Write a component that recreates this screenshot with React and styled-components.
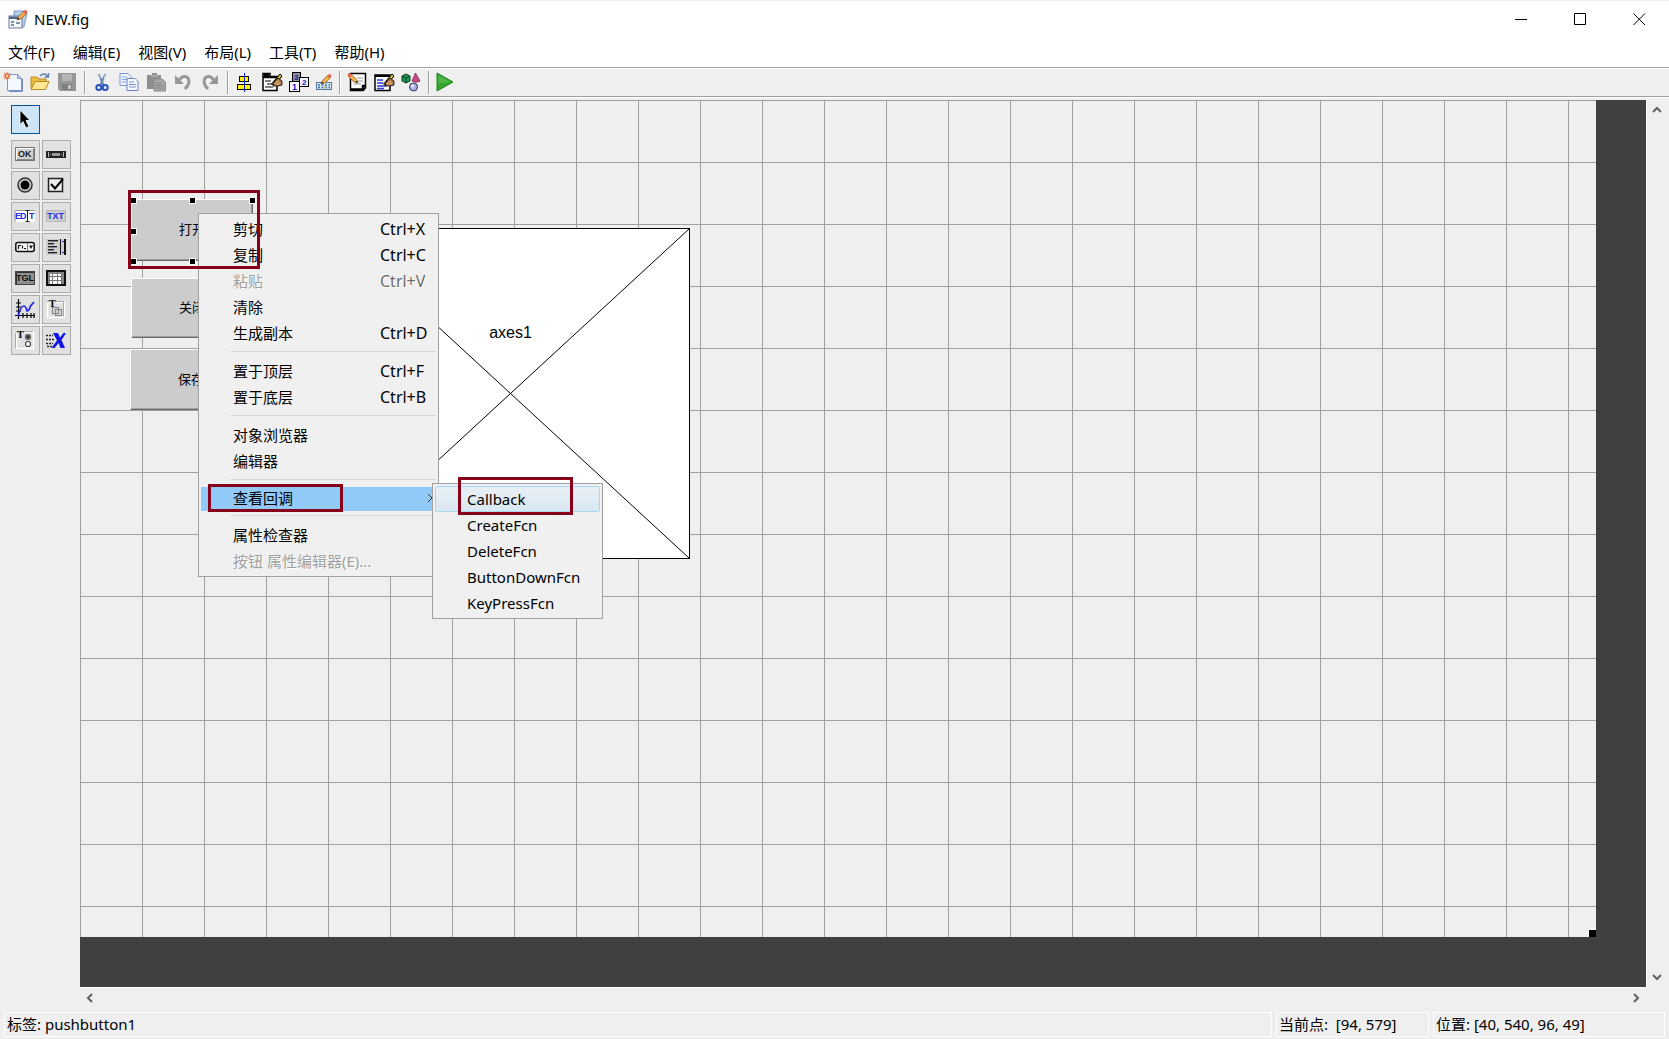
import React from "react";
import styled, { createGlobalStyle, css } from "styled-components";

const UI_FONT = `"Noto Sans", "Noto Sans CJK SC", sans-serif`;
const FACE = "#efefef";
const LINE = "#a0a0a0";
const MARK = "#850018";

const GlobalStyle = createGlobalStyle`
  * { box-sizing: border-box; }
  body { margin: 0; font: 15px/20px ${UI_FONT}; color: #000; background: ${FACE}; }
  button { font: inherit; color: inherit; border: 0; padding: 0; background: none; }
  svg { display: block; flex: none; overflow: visible; }
`;

const Window = styled.div`
  display: flex;
  flex-direction: column;
  height: 100vh;
  overflow: hidden;
  background: ${FACE};
`;

const TitleBar = styled.header`
  display: flex;
  align-items: center;
  height: 37px;
  padding-left: 8px;
  gap: 6px;
  background: #fff;
  border-top: 1px solid ${FACE};
`;

const Title = styled.h1`
  flex: 1;
  margin: 0;
  font-size: 15px;
  font-weight: 400;
  line-height: 20px;
`;

const CaptionButtons = styled.div`
  display: flex;
`;

const CaptionButton = styled.button`
  display: flex;
  align-items: center;
  justify-content: center;
  width: 59px;
  height: 36px;
`;

const MenuBar = styled.nav`
  display: flex;
  align-items: center;
  gap: 18px;
  height: 31px;
  padding-left: 8px;
  background: #fff;
  border-bottom: 1px solid ${LINE};
`;

const Toolbar = styled.div`
  display: flex;
  align-items: flex-start;
  height: 29px;
  border-top: 1px solid #fff;
  border-bottom: 1px solid ${LINE};
`;

const ToolButton = styled.button`
  display: flex;
  align-items: center;
  justify-content: center;
  width: ${(p) => (p.$narrow ? 23 : 27)}px;
  height: 26px;
  padding-right: 1px;
`;

const ToolDivider = styled.span`
  width: 2px;
  height: 23px;
  margin: 2px 3px;
  border-left: 1px solid ${LINE};
  border-right: 1px solid #fff;
`;

const Body = styled.main`
  display: flex;
  flex: 1;
  min-height: 0;
  border-top: 1px solid #fff;
  padding-top: 2px;
`;

const Palette = styled.aside`
  width: 80px;
  padding: 5px 9px 0 11px;
`;

const PaletteGrid = styled.div`
  display: grid;
  grid-template-columns: 29px 29px;
  gap: 2px;
  margin-top: 6px;
`;

const PaletteButton = styled.button`
  display: flex;
  align-items: center;
  justify-content: center;
  width: 29px;
  height: 29px;
  padding: 0 1px 1px 0;
  background: ${(p) => (p.$active ? "#cce4f7" : "#e1e1e1")};
  border: 1px solid ${(p) => (p.$active ? "#005499" : "#adadad")};
`;

const Workspace = styled.section`
  display: grid;
  flex: 1;
  min-width: 0;
  grid-template-columns: 1fr 23px;
  grid-template-rows: 1fr 25px;
`;

const Backdrop = styled.div`
  display: flex;
  padding: 0 50px 50px 0;
  background: #404040;
  min-width: 0;
  min-height: 0;
`;

const Canvas = styled.div`
  position: relative;
  flex: 1;
  background-color: ${FACE};
  background-image: linear-gradient(${LINE} 1px, transparent 1px),
    linear-gradient(90deg, ${LINE} 1px, transparent 1px);
  background-size: 62px 62px;
`;

const ScrollBar = styled.div`
  display: flex;
  justify-content: space-between;
  flex-direction: ${(p) => (p.$vertical ? "column" : "row")};
  align-items: flex-start;
  ${(p) =>
    p.$vertical
      ? css`border-left: 1px solid #fff;`
      : css`border-top: 1px solid #fff;`}
`;

const ScrollButton = styled.button`
  display: flex;
  align-items: center;
  justify-content: center;
  width: 20px;
  height: 20px;
`;

const PushButton = styled.button`
  position: absolute;
  left: ${(p) => p.$x}px;
  top: ${(p) => p.$y}px;
  width: 122px;
  height: ${(p) => p.$h}px;
  padding-bottom: 2px;
  background: #ccc;
  font: 13px/16px "Noto Sans CJK SC", sans-serif;
  border: 1px solid;
  border-color: #fff #696969 #696969 #fff;
  box-shadow: inset -1px -1px #a0a0a0;
`;

const Handle = styled.i`
  position: absolute;
  left: ${(p) => p.$x}px;
  top: ${(p) => p.$y}px;
  width: 5px;
  height: 5px;
  background: #000;
  box-shadow: 0 0 0 1px #fff;
`;

const ResizeCorner = styled.i`
  position: absolute;
  right: 0;
  bottom: 0;
  width: 8px;
  height: 8px;
  background: #000;
  border: solid #fff;
  border-width: 1px 0 0 1px;
`;

const Axes = styled.div`
  position: absolute;
  left: 251px;
  top: 128px;
  width: 359px;
  height: 331px;
  background: #fff;
  border: 1px solid #000;
`;

const AxesCross = styled.svg`
  width: 100%;
  height: 100%;
`;

const AxesLabel = styled.span`
  position: absolute;
  left: 0;
  right: 0;
  top: 94px;
  text-align: center;
  font: 16px/20px "Liberation Sans", Arial, sans-serif;
`;

const Popup = styled.div`
  position: absolute;
  left: ${(p) => p.$x}px;
  top: ${(p) => p.$y}px;
  width: ${(p) => p.$w}px;
  padding: ${(p) => p.$pad};
  background: #f0f0f0;
  border: 1px solid ${LINE};
`;

const MenuItem = styled.button`
  display: flex;
  align-items: center;
  width: 100%;
  height: ${(p) => (p.$open ? 24 : 26)}px;
  padding: 0 3px 2px 32px;
  text-align: left;
  white-space: nowrap;
  background: ${(p) => (p.$open ? "#91c9f7" : "none")};
  &:disabled {
    color: #a0a0a0;
    text-shadow: 1px 1px #fff;
  }
`;

const MenuLabel = styled.span`
  flex: 1 0 147px;
`;

const Shortcut = styled.span`
  flex: 0 0 53px;
  font-size: 16px;
  ${MenuItem}:disabled & { color: #6d6d6d; }
`;

const MenuRule = styled.hr`
  height: 1px;
  margin: 4px 0 7px 30px;
  border: 0;
  background: #d7d7d7;
`;

const SubItem = styled.button`
  display: block;
  width: 100%;
  height: 26px;
  padding-left: 31px;
  text-align: left;
  border: 1px solid transparent;
  border-radius: 2px;
  ${(p) =>
    p.$hot &&
    css`
      border-color: #a8d8f0;
      background: linear-gradient(#e8eff4, #d9e8f1);
    `}
`;

const Marker = styled.div`
  position: absolute;
  left: ${(p) => p.$x}px;
  top: ${(p) => p.$y}px;
  width: ${(p) => p.$w}px;
  height: ${(p) => p.$h}px;
  border: 3px solid ${MARK};
  pointer-events: none;
`;

const StatusBar = styled.footer`
  display: flex;
  gap: 4px;
  padding: 0 4px 2px;
`;

const StatusCell = styled.div`
  flex: ${(p) => (p.$w ? `0 0 ${p.$w}px` : "1")};
  height: 25px;
  padding: 0 2px;
  line-height: 23px;
  white-space: pre;
  border: 1px solid #fff;
`;

/* ---------- icons ---------- */

const Svg = ({ s = 20, crisp, children }) => (
  <svg width={s} height={s} viewBox="0 0 20 20" fill="none" aria-hidden="true"
    shapeRendering={crisp ? "crispEdges" : "auto"}>
    {children}
  </svg>
);

const Pencil = ({ x = 0, y = 0 }) => (
  <g transform={`translate(${x} ${y})`}>
    <path d="M0 10 1.5 6.500 7 1 9.500 3.500 4 9Z" fill="#f3b04a" stroke="#8a5a1c" strokeWidth=".7" />
    <path d="M6 2 7.500.500Q9-.500 10 1 11 2 10 3L8.500 4.500Z" fill="#e8674a" />
    <path d="M0 10 1 7.500 2.500 9Z" fill="#222" />
  </g>
);

const Hand = () => (
  <g>
    <path d="M9.500 12 18 2 20 4 13 13Z" fill="#d8c23c" stroke="#000" />
    <path d="M12 10 16 6 20 9V13L15 14 11 14Z" fill="#b07a48" stroke="#000" strokeWidth=".8" />
    <path d="M13 12 17 9M15 13 18 11" stroke="#f0c890" />
  </g>
);

const AppIcon = () => (
  <Svg>
    <path d="M6 2H17L19 4 16 18 6 17Z" fill="#b9cdea" stroke="#7f9ccc" />
    <rect x="1" y="7" width="13" height="12" fill="#f4f7fb" stroke="#66799c" />
    <path d="M1 7.500H14V10H1Z" fill="#53688f" />
    <path d="M3 13H6M3 16H6M8 14H12" stroke="#5b6d8e" strokeWidth="1.500" />
    <Pencil x={9} y={1} />
  </Svg>
);

const NewIcon = () => (
  <Svg>
    <path d="M4.500 2.500H14.500L18.500 6.500V18.500H4.500Z" fill="#f3f7ff" stroke="#7c97cf" />
    <path d="M19.500 7V19.500H6" stroke="#7088bd" />
    <path d="M14.500 2.500V6.500H18.500Z" fill="#bccdf0" stroke="#7c97cf" />
    <path d="M4 0V8M0 4H8M1 1 7 7M7 1 1 7" stroke="#e58a66" strokeWidth="1.200" />
    <circle cx="4" cy="4" r="2" fill="#f9cf9a" stroke="#d8552e" />
  </Svg>
);

const OpenIcon = () => (
  <Svg>
    <path d="M1 16V5H7L9 7H16V10" fill="#e9bf4a" stroke="#b98a1e" />
    <path d="M1 17.500 5 9.500H19L15.500 17.500Z" fill="#ffe793" stroke="#b98a1e" />
    <path d="M10 4Q14 0 18 4M18.500 1V5H14.500" stroke="#5f7fae" strokeWidth="1.300" />
  </Svg>
);

const SaveIcon = () => (
  <Svg>
    <path d="M1 1H19V19H3L1 17Z" fill="#969696" />
    <path d="M5 2H15V9H5Z" fill="#b5b5b5" />
    <path d="M5 12H15V18H5Z" fill="#7f7f7f" />
    <path d="M11 13H14V17H11Z" fill="#c4c4c4" />
  </Svg>
);

const CutIcon = () => (
  <Svg>
    <path d="M6.500 2 12 14M13.500 2 8 14" stroke="#6b87a8" strokeWidth="2" />
    <path d="M6.500 2 8 7M13.500 2 12 7" stroke="#c5d5e6" />
    <circle cx="6.800" cy="15.500" r="2.500" stroke="#2455c0" strokeWidth="2" />
    <circle cx="13.200" cy="15.500" r="2.500" stroke="#2455c0" strokeWidth="2" />
  </Svg>
);

const CopyIcon = () => (
  <Svg>
    <path d="M1 1.500H9L12 4.500V13.500H1Z" fill="#eef3ff" stroke="#7c97cf" />
    <path d="M3 5H8M3 7.500H9M3 10H7" stroke="#8aa3d8" />
    <path d="M8 6.500H16L19 9.500V18.500H8Z" fill="#f5f8ff" stroke="#6682c0" />
    <path d="M10 10H15M10 12.500H17M10 15H17" stroke="#6f8fd0" />
  </Svg>
);

const PasteIcon = () => (
  <Svg>
    <path d="M1 3H6V1H11V3H15V17H1Z" fill="#8f8f8f" />
    <path d="M5 4H12" stroke="#bdbdbd" />
    <path d="M8 7H16L19.500 10V19H8Z" fill="#a6a6a6" stroke="#8a8a8a" />
    <path d="M10 11H15M10 13.500H17M10 16H17" stroke="#828282" />
  </Svg>
);

const UndoIcon = () => (
  <Svg>
    <path d="M6 8Q11 2 15 6 18 11 12 17" stroke="#979797" strokeWidth="3" />
    <path d="M2 3V12H11Z" fill="#979797" />
  </Svg>
);

const RedoIcon = () => (
  <Svg>
    <path d="M14 8Q9 2 5 6 2 11 8 17" stroke="#979797" strokeWidth="3" />
    <path d="M18 3V12H9Z" fill="#979797" />
  </Svg>
);

const AlignIcon = () => (
  <Svg crisp>
    <rect x="4.500" y="4.500" width="9" height="5" fill="#ffee00" stroke="#000" />
    <rect x="2.500" y="12.500" width="13" height="5" fill="#ffee00" stroke="#000" />
    <path d="M9 1V20" stroke="#1020d0" />
  </Svg>
);

const MenuEditorIcon = () => (
  <Svg>
    <path d="M1 1.500H8V5H15V18.500H1Z" fill="#fff" stroke="#000" strokeWidth="1.500" />
    <path d="M1 5H19M2 3H7" stroke="#000" strokeWidth="2.500" />
    <path d="M3 9H9M5 12H11M3 15H11" stroke="#555" strokeWidth="1.500" />
    <Hand />
  </Svg>
);

const IconText = styled.text`
  font: bold ${(p) => p.$size || 9}px "Liberation Sans", Arial, sans-serif;
`;

const SerifText = styled.text`
  font: bold 10px "Liberation Serif", "Times New Roman", serif;
`;

const TabOrderIcon = () => (
  <Svg crisp>
    <rect x="3.500" y=".5" width="8" height="9" fill="#8f8f9f" stroke="#000" />
    <rect x="10.500" y="5.500" width="9" height="9" fill="#f1f1ff" stroke="#000" />
    <rect x=".5" y="9.500" width="10" height="10" fill="#fff" stroke="#000" />
    <IconText $size={8} x="5" y="8" fill="#20209a">3</IconText>
    <IconText $size={8} x="13" y="13" fill="#2020c0">2</IconText>
    <IconText x="3" y="18" fill="#1010d0">1</IconText>
  </Svg>
);

const ToolbarEditorIcon = () => (
  <Svg>
    <rect x="2.500" y="10.500" width="15" height="7" fill="#d6e6f2" stroke="#557799" />
    <path d="M4 13H16M4 15.500H16" stroke="#3a6ea8" strokeWidth="1.500" strokeDasharray="2 1.500" />
    <path d="M9 15.500H12" stroke="#e0c030" strokeWidth="1.500" />
    <Pencil x={7} y={2} />
  </Svg>
);

const EditorIcon = () => (
  <Svg>
    <path d="M3.500 1.500H18.500V16L16 18.500H3.500Z" fill="#fff" stroke="#000" strokeWidth="1.500" />
    <path d="M4 17.500H16V14H18" stroke="#000" strokeWidth="2.500" />
    <path d="M10 6H16M11 9H16M7 12H14" stroke="#999" />
    <g transform="translate(12 1) scale(-1 1)"><Pencil x={1} y={0} /></g>
  </Svg>
);

const InspectorIcon = () => (
  <Svg>
    <rect x="1" y="3" width="15" height="15.500" fill="#fff" stroke="#000" strokeWidth="1.500" />
    <path d="M1 4H16" stroke="#000" strokeWidth="2" />
    <path d="M3 8H9M3 11H9M3 14H12M3 16.500H10" stroke="#2b3bd8" strokeWidth="1.500" />
    <Hand />
  </Svg>
);

const BrowserIcon = () => (
  <Svg>
    <path d="M1 4 5 2 9 4V9L5 11 1 9Z" fill="#1f9a55" stroke="#0a3d20" />
    <path d="M1 4 5 6 9 4M5 6V11" stroke="#0a3d20" />
    <path d="M11 9 14.500 1 19 9Q15 11.500 11 9Z" fill="#c64a86" stroke="#7d2352" strokeWidth=".8" />
    <circle cx="12.500" cy="15" r="4" fill="#a9aee6" stroke="#33365e" />
    <circle cx="11.500" cy="14" r="1.500" fill="#eef" />
  </Svg>
);

const RunIcon = () => (
  <Svg>
    <path d="M1 1 17 10 1 19Z" fill="#35a52f" stroke="#23841f" />
    <path d="M2.500 3.500 14 10 2.500 11Z" fill="#62c458" opacity=".6" />
  </Svg>
);

const ArrowIcon = () => (
  <Svg>
    <path d="M5 1V15.500L8 12.500 11 19 14 17.500 11 11.500H15Z" fill="#000" stroke="#fff" strokeWidth=".8" />
  </Svg>
);

const PushIcon = () => (
  <Svg crisp>
    <rect x=".5" y="3.500" width="19" height="13" fill="#d0d0d0" stroke="#777" />
    <path d="M1.500 15V4.500H18" stroke="#fff" />
    <path d="M2 15.500H18.500V5" stroke="#888" />
    <IconText x="3" y="13" fill="#222">OK</IconText>
  </Svg>
);

const SliderIcon = () => (
  <Svg crisp>
    <rect x="0" y="7" width="20" height="7" fill="#222" />
    <rect x="6" y="9" width="8" height="3" fill="#999" />
    <path d="M2.500 8V13M4 10.500H5M17.500 8V13M15 10.500H16" stroke="#bbb" />
  </Svg>
);

const RadioIcon = () => (
  <Svg>
    <circle cx="10" cy="10" r="7" fill="#c9c9c9" stroke="#333" strokeWidth="1.500" />
    <circle cx="10" cy="10" r="4.500" fill="#000" />
  </Svg>
);

const CheckIcon = () => (
  <Svg>
    <rect x="2.500" y="3.500" width="14" height="13" fill="#ededed" stroke="#222" strokeWidth="1.500" />
    <path d="M5 9 9 13.500 17 4" stroke="#000" strokeWidth="2" />
  </Svg>
);

const EditIcon = () => (
  <Svg>
    <rect x="0" y="4" width="20" height="12" fill="#fff" />
    <path d="M0 16V4.500H20" stroke="#999" />
    <IconText x="0" y="13" fill="#2b2bf0">E</IconText>
    <IconText x="5" y="13" fill="#2b2bf0">D</IconText>
    <IconText x="14" y="13" fill="#2b2bf0">T</IconText>
    <path d="M10.500 4.500H14.500M10.500 15.500H14.500M12.500 5V15" stroke="#222" />
  </Svg>
);

const TextIcon = () => (
  <Svg>
    <rect x=".5" y="4.500" width="19" height="11" fill="#cfcfcf" stroke="#b5b5b5" />
    <IconText x="1" y="13" fill="#2b2bf0">TXT</IconText>
  </Svg>
);

const PopupIcon = () => (
  <Svg>
    <rect x=".8" y="5.500" width="18.400" height="9" rx="2" fill="#f6f6f6" stroke="#111" strokeWidth="1.500" />
    <path d="M12.500 6V14" stroke="#777" />
    <path d="M3.500 12V8.500H6M7.500 8.500V11.500M9 11.500H11" stroke="#111" strokeWidth="1.200" />
    <path d="M14 8.500H18L16 12Z" fill="#111" />
  </Svg>
);

const ListIcon = () => (
  <Svg crisp>
    <rect x="0" y="2" width="20" height="16" fill="#cdcdcd" />
    <path d="M2 3.500H12M2 6.500H8M2 9.500H11M2 12.500H8M2 15.500H11" stroke="#222" />
    <path d="M2 4.500H12M2 7.500H8M2 10.500H11M2 13.500H8M2 16.500H11" stroke="#888" />
    <path d="M14.500 2V18M19 2V18" stroke="#111" />
    <path d="M19 2V18" stroke="#111" strokeWidth="2" />
    <path d="M16 4.500H18M16 15.500H18" stroke="#2b2bf0" />
  </Svg>
);

const ToggleIcon = () => (
  <Svg>
    <rect x=".5" y="3.500" width="19" height="13" fill="#8f8f8f" stroke="#444" />
    <path d="M1.500 16V4.500H19" stroke="#333" />
    <IconText x="1" y="13" fill="#111">TGL</IconText>
  </Svg>
);

const TableIcon = () => (
  <Svg crisp>
    <rect x="1" y="3" width="18" height="14" fill="#fff" stroke="#111" strokeWidth="2" />
    <path d="M2 5H18M3 4V16M17 4V16" stroke="#888" strokeWidth="2" />
    <path d="M2 8.500H16M2 12.500H16M6.500 4V16M11.500 4V16M15.500 4V16" stroke="#777" />
  </Svg>
);

const PlotIcon = () => (
  <Svg>
    <path d="M3.500 0V20M0 16.500H20M1 4H6M1 8H6M1 12H6M8 14V19M12 14V19M16 14V19M19 14V19" stroke="#000" strokeWidth="1.200" />
    <path d="M3 17Q6 7 8.500 7T12 12Q14 12 15.500 7L19 3" stroke="#2222f0" strokeWidth="1.700" />
  </Svg>
);

const PanelIcon = () => (
  <Svg>
    <path d="M1 3.500H4M10 3.500H18.500V18.500H1.500V3" stroke="#fff" strokeWidth="1.500" />
    <path d="M.5 2.500H3M10 2.500H17.500V17.500" stroke="#aaa" />
    <rect x="6.500" y="8.500" width="6" height="6" stroke="#888" strokeWidth="1.200" />
    <rect x="9.500" y="10.500" width="6" height="6" stroke="#888" strokeWidth="1.200" />
    <SerifText x="3" y="8" fill="#000">T</SerifText>
  </Svg>
);

const GroupIcon = () => (
  <Svg>
    <path d="M1.500 3V18.500H18.500V2.500H10" stroke="#fff" strokeWidth="1.500" />
    <path d="M.5 3V17.500M9 1.500H18" stroke="#aaa" />
    <circle cx="13" cy="7" r="2.500" fill="#333" stroke="#777" strokeWidth="1.500" />
    <circle cx="13" cy="14" r="2.500" fill="#fff" stroke="#444" strokeWidth="1.200" />
    <SerifText x="2" y="8" fill="#000">T</SerifText>
  </Svg>
);

const ActiveXIcon = () => (
  <Svg>
    <path d="M0 5.500H7M0 9.500H8M0 13.500H7M1 16.500H6" stroke="#222" strokeWidth="1.300" strokeDasharray="2 1" />
    <path d="M7 3H12L14 7.500 17.500 3H20L15.500 10 19 18H14.500L12.500 13 8.500 18H5.500L11 10.500Z" fill="#1212e8" />
  </Svg>
);

const Chevron = ({ d, color = "#606060" }) => (
  <svg width="10" height="10" viewBox="0 0 10 10" fill="none" stroke={color} strokeWidth="2" aria-hidden="true">
    <path d={d} />
  </svg>
);

const Caption = ({ d }) => (
  <svg width="13" height="13" viewBox="0 0 13 13" fill="none" stroke="#000" aria-hidden="true">
    <path d={d} />
  </svg>
);

/* ---------- data ---------- */

const menus = ["文件(F)", "编辑(E)", "视图(V)", "布局(L)", "工具(T)", "帮助(H)"];

const tools = [
  [["新建", NewIcon], ["打开", OpenIcon], ["保存", SaveIcon]],
  [["剪切", CutIcon], ["复制", CopyIcon], ["粘贴", PasteIcon], ["撤消", UndoIcon], ["重做", RedoIcon]],
  [["对齐对象", AlignIcon], ["菜单编辑器", MenuEditorIcon], ["Tab 键顺序编辑器", TabOrderIcon], ["工具栏编辑器", ToolbarEditorIcon, true]],
  [["编辑器", EditorIcon], ["属性检查器", InspectorIcon], ["对象浏览器", BrowserIcon]],
  [["运行", RunIcon]],
];

const palette = [
  ["按钮", PushIcon], ["滑块", SliderIcon],
  ["单选按钮", RadioIcon], ["复选框", CheckIcon],
  ["可编辑文本", EditIcon], ["静态文本", TextIcon],
  ["弹出式菜单", PopupIcon], ["列表框", ListIcon],
  ["切换按钮", ToggleIcon], ["表", TableIcon],
  ["坐标区", PlotIcon], ["面板", PanelIcon],
  ["按钮组", GroupIcon], ["ActiveX 控件", ActiveXIcon],
];

const contextGroups = [
  [
    { label: "剪切", keys: "Ctrl+X" },
    { label: "复制", keys: "Ctrl+C" },
    { label: "粘贴", keys: "Ctrl+V", disabled: true },
    { label: "清除" },
    { label: "生成副本", keys: "Ctrl+D" },
  ],
  [
    { label: "置于顶层", keys: "Ctrl+F" },
    { label: "置于底层", keys: "Ctrl+B" },
  ],
  [{ label: "对象浏览器" }, { label: "编辑器" }],
  [{ label: "查看回调", open: true }],
  [{ label: "属性检查器" }, { label: "按钮 属性编辑器(E)...", disabled: true }],
];

const callbacks = ["Callback", "CreateFcn", "DeleteFcn", "ButtonDownFcn", "KeyPressFcn"];

const handles = [[51, 98], [110, 98], [170, 98], [51, 129], [51, 159], [110, 159]];

export default function App() {
  return (
    <Window>
      <GlobalStyle />
      <TitleBar>
        <AppIcon />
        <Title>NEW.fig</Title>
        <CaptionButtons>
          <CaptionButton aria-label="最小化"><Caption d="M0 6.500H12" /></CaptionButton>
          <CaptionButton aria-label="最大化"><Caption d="M.5.5H11.500V11.500H.5Z" /></CaptionButton>
          <CaptionButton aria-label="关闭窗口"><Caption d="M.5.5 12 12M12 .5.5 12" /></CaptionButton>
        </CaptionButtons>
      </TitleBar>
      <MenuBar>
        {menus.map((m) => <button key={m}>{m}</button>)}
      </MenuBar>
      <Toolbar role="toolbar">
        {tools.map((group, i) => (
          <React.Fragment key={i}>
            {i > 0 && <ToolDivider />}
            {group.map(([name, Icon, narrow]) => (
              <ToolButton key={name} aria-label={name} $narrow={narrow}><Icon /></ToolButton>
            ))}
          </React.Fragment>
        ))}
      </Toolbar>
      <Body>
        <Palette>
          <PaletteButton $active aria-label="选择"><ArrowIcon /></PaletteButton>
          <PaletteGrid>
            {palette.map(([name, Icon]) => (
              <PaletteButton key={name} aria-label={name}><Icon /></PaletteButton>
            ))}
          </PaletteGrid>
        </Palette>
        <Workspace>
          <Backdrop>
            <Canvas>
              <Axes>
                <AxesCross viewBox="0 0 357 329" preserveAspectRatio="none" stroke="#000">
                  <path d="M0 0 357 329M357 0 0 329" />
                </AxesCross>
                <AxesLabel>axes1</AxesLabel>
              </Axes>
              <PushButton $x={51} $y={99} $h={62}>打开</PushButton>
              <PushButton $x={51} $y={178} $h={60}>关闭</PushButton>
              <PushButton $x={50} $y={249} $h={61}>保存</PushButton>
              {handles.map(([x, y]) => <Handle key={`${x}-${y}`} $x={x} $y={y} />)}
              <ResizeCorner />
              <Popup role="menu" $x={118} $y={113} $w={241} $pad="3px 2px 1px">
                {contextGroups.map((group, i) => (
                  <React.Fragment key={i}>
                    {i > 0 && <MenuRule />}
                    {group.map((item) => (
                      <MenuItem key={item.label} role="menuitem" disabled={item.disabled} $open={item.open}>
                        <MenuLabel>{item.label}</MenuLabel>
                        {item.keys && <Shortcut>{item.keys}</Shortcut>}
                        {item.open && (
                          <svg width="6" height="10" viewBox="0 0 6 10" fill="none" stroke="#333" aria-hidden="true">
                            <path d="M1 1 5 5 1 9" />
                          </svg>
                        )}
                      </MenuItem>
                    ))}
                  </React.Fragment>
                ))}
              </Popup>
              <Popup role="menu" $x={352} $y={383} $w={171} $pad="2px">
                {callbacks.map((name, i) => (
                  <SubItem key={name} role="menuitem" $hot={i === 0}>{name}</SubItem>
                ))}
              </Popup>
              <Marker $x={48} $y={90} $w={132} $h={79} />
              <Marker $x={128} $y={384} $w={135} $h={28} />
              <Marker $x={378} $y={377} $w={115} $h={38} />
            </Canvas>
          </Backdrop>
          <ScrollBar $vertical>
            <ScrollButton aria-label="向上滚动"><Chevron d="M1 7 5 3 9 7" /></ScrollButton>
            <ScrollButton aria-label="向下滚动"><Chevron d="M1 3 5 7 9 3" /></ScrollButton>
          </ScrollBar>
          <ScrollBar>
            <ScrollButton aria-label="向左滚动"><Chevron d="M7 1 3 5 7 9" /></ScrollButton>
            <ScrollButton aria-label="向右滚动"><Chevron d="M3 1 7 5 3 9" /></ScrollButton>
          </ScrollBar>
        </Workspace>
      </Body>
      <StatusBar>
        <StatusCell>标签: pushbutton1</StatusCell>
        <StatusCell $w={153}>{"当前点:  [94, 579]"}</StatusCell>
        <StatusCell $w={232}>位置: [40, 540, 96, 49]</StatusCell>
      </StatusBar>
    </Window>
  );
}
